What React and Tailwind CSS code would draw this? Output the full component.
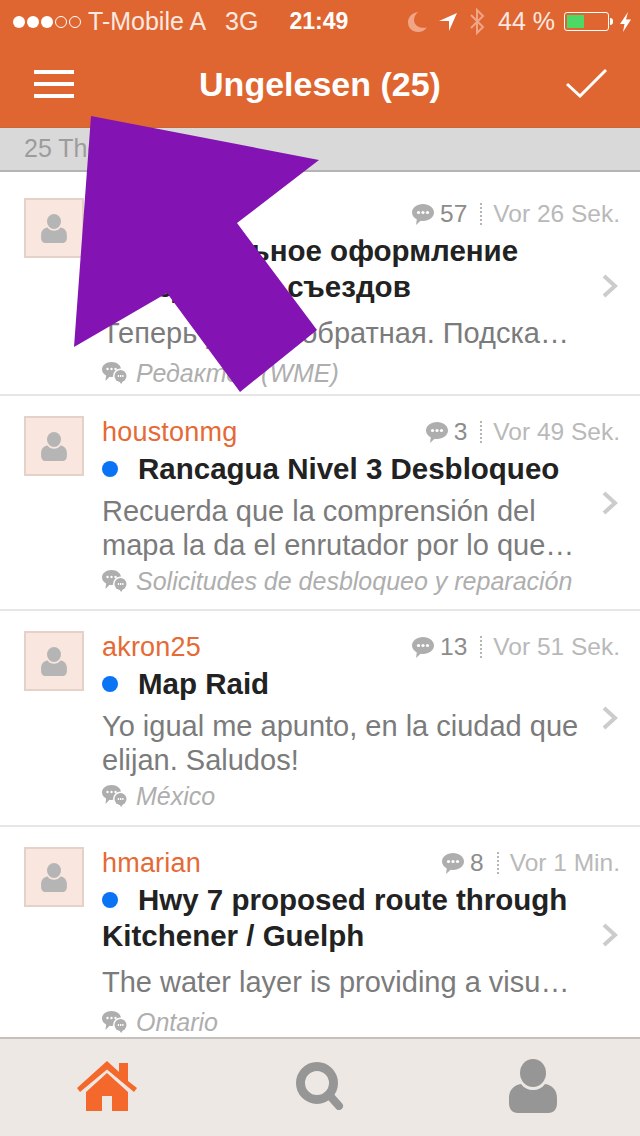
const font = { fontFamily: '"Liberation Sans", Arial, sans-serif' };

const threads = [
  {
    user: 'Ivan',
    replies: 57,
    age: 'Vor 26 Sek.',
    title: ['Нормальное оформление', 'въезды или съездов'],
    snippet: ['Теперь улица, обратная. Подска…'],
    forum: 'Редактор (WME)',
    box: 'h-[224px] pt-[26px] border-b-2',
  },
  {
    user: 'houstonmg',
    replies: 3,
    age: 'Vor 49 Sek.',
    title: ['Rancagua Nivel 3 Desbloqueo'],
    snippet: ['Recuerda que la comprensión del', 'mapa la da el enrutador por lo que…'],
    forum: 'Solicitudes de desbloqueo y reparación',
    box: 'h-[215px] pt-5 border-b-2',
  },
  {
    user: 'akron25',
    replies: 13,
    age: 'Vor 51 Sek.',
    title: ['Map Raid'],
    snippet: ['Yo igual me apunto, en la ciudad que', 'elijan. Saludos!'],
    forum: 'México',
    box: 'h-[216px] pt-5 border-b-2',
  },
  {
    user: 'hmarian',
    replies: 8,
    age: 'Vor 1 Min.',
    title: ['Hwy 7 proposed route through', 'Kitchener / Guelph'],
    snippet: ['The water layer is providing a visu…'],
    forum: 'Ontario',
    box: 'h-[210px] pt-5',
  },
];

const PersonIcon = ({ className }) => (
  <svg viewBox="0 0 48 54" className={className} fill="currentColor">
    <ellipse cx="24" cy="14" rx="13" ry="14" />
    <path d="M12 25c3 4 7 6 12 6s9-2 12-6c7 1 12 6 12 14v5c0 6-3 10-9 10H9c-6 0-9-4-9-10v-5c0-8 5-13 12-14z" />
  </svg>
);

const ForumIcon = () => (
  <svg viewBox="0 0 25 22" className="w-[25px] h-[22px] shrink-0 text-[#aeaeae]" fill="currentColor">
    <path d="M9.500 0C15 0 19 3.200 19 7.500c0 4.300-4 7.500-9.500 7.500-.7 0-1.300 0-2-.2L3.500 19l.6-5.500C1.600 12.200 0 10 0 7.500 0 3.200 4 0 9.500 0z" />
    <circle cx="18.500" cy="14" r="7.500" fill="#fff" />
    <circle cx="18.500" cy="14" r="6" />
    <path d="M17 19h4l-1.800 3z" />
    <g fill="#fff">
      <circle cx="5.500" cy="7" r="1.200" />
      <circle cx="9.500" cy="7" r="1.200" />
      <circle cx="13.500" cy="7" r="1.200" />
      <rect x="15.800" y="13" width="1.300" height="2" />
      <rect x="18" y="13" width="1.300" height="2" />
      <rect x="20.200" y="13" width="1.300" height="2" />
    </g>
  </svg>
);

const ReplyIcon = () => (
  <svg viewBox="0 0 22 21" className="w-[22px] h-[21px] text-[#aeaeae]" fill="currentColor">
    <path d="M11 0c6.100 0 11 3.800 11 8.500S17.100 17 11 17c-.9 0-1.600-.1-2.400-.2L4 21l.8-5.600C1.900 13.900 0 11.400 0 8.500 0 3.800 4.900 0 11 0z" />
    <g fill="#fff">
      <circle cx="6.500" cy="8.500" r="1.600" />
      <circle cx="11" cy="8.500" r="1.600" />
      <circle cx="15.500" cy="8.500" r="1.600" />
    </g>
  </svg>
);

const ThreadRow = ({ thread }) => {
  const shortSnippet = thread.snippet.length === 1;
  return (
    <div className={`relative flex pl-6 pr-5 border-[#e6e6e6] ${thread.box}`}>
      <div className="w-[60px] h-[60px] shrink-0 bg-[#f9e6df] border-2 border-[#e6d1c8] flex items-center justify-center">
        <PersonIcon className="w-[26px] h-[29px] text-[#b5b5b5]" />
      </div>
      <div className="ml-[18px] flex-1 min-w-0">
        <div className="flex items-center justify-between h-[32px]">
          <span className="text-[27px] tracking-[0.2px] text-[#e56a35]">{thread.user}</span>
          <div className="flex items-center text-[24.5px]">
            <ReplyIcon />
            <span className="ml-[6px] text-[#8c8c8c]">{thread.replies}</span>
            <span className="ml-[13px] mr-[11px] h-[22px] border-l-2 border-dotted border-[#b5b5b5]" />
            <span className="text-[#b9b9b9]">{thread.age}</span>
          </div>
        </div>
        <div className="mt-[3px] text-[29.5px] leading-[36px] font-bold text-[#222222]">
          {thread.title.map((line, i) => (
            <div key={line} className="flex items-center whitespace-nowrap">
              {i === 0 && <span className="w-4 h-4 mr-5 rounded-full bg-[#0a74f5]" />}
              {line}
            </div>
          ))}
        </div>
        <div className={`text-[29px] leading-[34px] text-[#7b7b7b] whitespace-nowrap ${shortSnippet ? 'mt-[11px] mb-[7px]' : 'mt-[7px] mb-[3px]'}`}>
          {thread.snippet.map((line) => (
            <div key={line}>{line}</div>
          ))}
        </div>
        <div className="flex items-center gap-[9px] text-[25px] leading-[32px] italic text-[#aeaeae] whitespace-nowrap">
          <ForumIcon />
          {thread.forum}
        </div>
      </div>
      <svg
        viewBox="0 0 16 24"
        className={`absolute right-[22px] top-1/2 -translate-y-1/2 w-4 h-6 text-[#cccccc] ${thread.title.length > 1 ? 'mt-[3px]' : ''}`}
        fill="none"
        stroke="currentColor"
        strokeWidth="4"
      >
        <path d="M2 2l11 10L2 22" />
      </svg>
    </div>
  );
};

const StatusBar = () => (
  <div className="flex items-center h-[40px] pt-[3px] pl-[13px] pr-[9px] text-[25px] text-[#fbe9e0]">
    <div className="flex items-center gap-[2px]">
      {[0, 1, 2].map((i) => (
        <span key={i} className="w-[12px] h-[12px] rounded-full bg-white" />
      ))}
      {[3, 4].map((i) => (
        <span key={i} className="w-[12px] h-[12px] rounded-full border border-white" />
      ))}
    </div>
    <span className="ml-[7px]">T-Mobile A</span>
    <span className="ml-[19px]">3G</span>
    <span className="ml-[31px] text-[23px] font-bold text-white">21:49</span>
    <div className="ml-auto flex items-center">
      <svg viewBox="0 0 19 20" className="w-[19px] h-[20px] text-[#f0a587]" fill="currentColor">
        <path d="M10 0C4 1 0 5 0 10.500S4.500 20 10 20c3.500 0 6.500-1.500 9-4.500C11 17 6 13 6 8c0-3 1.500-6 4-8z" />
      </svg>
      <svg viewBox="0 0 18 18" className="ml-[12px] w-[18px] h-[18px] text-white" fill="currentColor">
        <path d="M18 0L10 18V8H0z" />
      </svg>
      <svg viewBox="0 0 16 27" className="ml-[12px] w-[16px] h-[27px] text-[#f0a587]" fill="none" stroke="currentColor" strokeWidth="2">
        <path d="M2 7l12 12-6 6V2l6 6L2 20" />
      </svg>
      <span className="ml-[13px]">44 %</span>
      <div className="ml-[9px] flex items-center">
        <div className="w-[45px] h-[19px] p-[2px] border border-white rounded-[3px]">
          <div className="w-[17px] h-full bg-[#4cd964]" />
        </div>
        <span className="w-[3px] h-[7px] ml-[1px] bg-white rounded-r-sm" />
      </div>
      <svg viewBox="0 0 11 20" className="ml-[7px] w-[11px] h-[20px] text-white" fill="currentColor">
        <path d="M8 0L0 12h4.500L3 20l8-12.500H6z" />
      </svg>
    </div>
  </div>
);

const Header = () => (
  <div className="bg-[#e06631] border-b border-[#c9673c]">
    <StatusBar />
    <div className="flex items-center justify-between h-[87px] pl-[34px] pr-[33px]">
      <div className="w-10 flex flex-col gap-[8px]">
        <span className="h-[4px] bg-white" />
        <span className="h-[4px] bg-white" />
        <span className="h-[4px] bg-white" />
      </div>
      <h1 className="pt-[2px] text-[34px] font-bold text-white">Ungelesen (25)</h1>
      <svg viewBox="0 0 41 29" className="w-[41px] h-[29px] text-white" fill="none" stroke="currentColor" strokeWidth="3">
        <path d="M1 15l13 12L40 1" />
      </svg>
    </div>
  </div>
);

const TabBar = () => (
  <div className="flex-1 flex items-start bg-[#eee8e5] border-t-2 border-[#c4c0bd] pt-[22px] pl-[77px]">
    <svg viewBox="0 0 60 50" className="w-[60px] h-[50px] text-[#f4682c]" fill="currentColor">
      <path d="M0 27L30 0l12 11V2h9v18l9 7-3 4L30 8.500 3 31z" />
      <path d="M30 12l21 19v19H35V35H25v15H9V31z" />
    </svg>
    <svg viewBox="0 0 48 48" className="w-12 h-12 ml-[159px] mt-px text-[#969696]" fill="none" stroke="currentColor">
      <circle cx="21" cy="21" r="16.500" strokeWidth="9" />
      <path d="M35 35l8 9" strokeWidth="8" strokeLinecap="round" />
    </svg>
    <PersonIcon className="w-12 h-[54px] ml-[165px] -mt-[2px] text-[#969696]" />
  </div>
);

const App = () => {
  return (
    <div style={font} className="relative flex flex-col w-[640px] h-[1136px] overflow-hidden bg-white">
      <Header />
      <div className="flex items-center h-[44px] pl-6 bg-[#d9d9d9] border-b-2 border-[#b5b5b5] text-[25px] text-[#9c9c9c]">
        25 Themen
      </div>
      {threads.map((thread) => (
        <ThreadRow key={thread.user} thread={thread} />
      ))}
      <TabBar />
      {/* Big annotation arrow sitting over the list */}
      <svg viewBox="0 0 640 1136" className="absolute inset-0 w-[640px] h-[1136px] pointer-events-none">
        <polygon points="91,116 319,160 237,223 317,330 240,392 167,293 74,347" fill="#8413b3" />
      </svg>
    </div>
  );
};

export default App;
